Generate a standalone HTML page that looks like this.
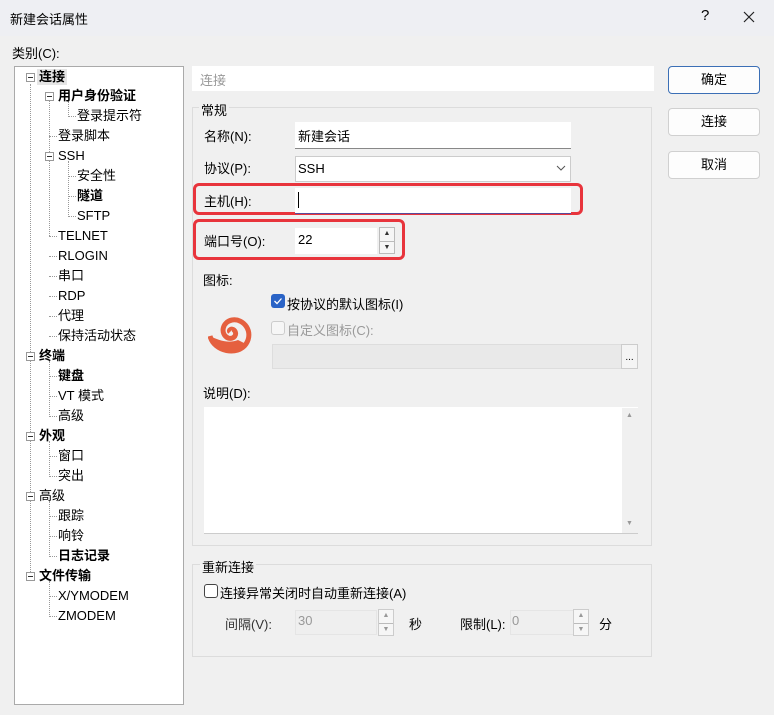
<!DOCTYPE html>
<html><head><meta charset="utf-8"><style>
*{box-sizing:border-box;margin:0;padding:0}
body{width:774px;height:715px;background:#f0f0f0;font-family:"Liberation Sans","Noto Sans CJK SC",sans-serif;font-size:13px;color:#000;position:relative;overflow:hidden}
.a{position:absolute;white-space:nowrap}
.t{position:absolute;white-space:nowrap;line-height:16px}
.b{font-weight:bold}
.ex{position:absolute;width:9px;height:9px;border:1px solid #999;background:#fff}
.ex:after{content:"";position:absolute;left:1px;top:3px;width:5px;height:1px;background:#333}
.vl{position:absolute;border-left:1px dotted #999;width:0}
.hl{position:absolute;border-top:1px dotted #999;height:0}
.inp{position:absolute;background:#fff;border-bottom:1px solid #888}
.btn{position:absolute;left:668px;width:92px;height:28px;background:#fdfdfd;border:1px solid #d0d0d0;border-radius:4px;text-align:center;line-height:26px}
.grp{position:absolute;border:1px solid #dcdcdc}
.spin{position:absolute;width:16px;border:1px solid #bbb;background:#f6f6f6}
.spin div{height:50%;font-size:7px;text-align:center;line-height:11px;color:#333}
.spin div+div{border-top:1px solid #bbb}
</style></head><body>
<div class="a" style="left:0;top:0;width:774px;height:36px;background:#eeeff3"></div>
<div class="a" style="left:10px;top:9px;font-size:13px">新建会话属性</div>
<div class="a" style="left:701px;top:7px;font-size:15px">?</div>
<svg class="a" style="left:743px;top:11px" width="12" height="12" viewBox="0 0 12 12"><path d="M1 1L11 11M11 1L1 11" stroke="#222" stroke-width="1.2"/></svg>
<div class="a" style="left:12px;top:43px">类别(C):</div>

<div class="a" style="left:14px;top:66px;width:170px;height:639px;background:#fff;border:1px solid #aaa"></div>
<div class="vl" style="left:30px;top:84px;height:492px"></div>
<div class="vl" style="left:49px;top:101px;height:135px"></div>
<div class="vl" style="left:49px;top:361px;height:56px"></div>
<div class="vl" style="left:49px;top:441px;height:36px"></div>
<div class="vl" style="left:49px;top:501px;height:56px"></div>
<div class="vl" style="left:49px;top:581px;height:36px"></div>
<div class="vl" style="left:68px;top:101px;height:16px"></div>
<div class="vl" style="left:68px;top:161px;height:56px"></div>
<div class="ex" style="left:26px;top:73px"></div>
<div class="ex" style="left:45px;top:92px"></div>
<div class="ex" style="left:45px;top:152px"></div>
<div class="ex" style="left:26px;top:352px"></div>
<div class="ex" style="left:26px;top:432px"></div>
<div class="ex" style="left:26px;top:492px"></div>
<div class="ex" style="left:26px;top:572px"></div>
<div class="hl" style="left:68px;top:116px;width:8px"></div>
<div class="hl" style="left:68px;top:176px;width:8px"></div>
<div class="hl" style="left:68px;top:196px;width:8px"></div>
<div class="hl" style="left:68px;top:216px;width:8px"></div>
<div class="hl" style="left:49px;top:136px;width:8px"></div>
<div class="hl" style="left:49px;top:236px;width:8px"></div>
<div class="hl" style="left:49px;top:256px;width:8px"></div>
<div class="hl" style="left:49px;top:276px;width:8px"></div>
<div class="hl" style="left:49px;top:296px;width:8px"></div>
<div class="hl" style="left:49px;top:316px;width:8px"></div>
<div class="hl" style="left:49px;top:336px;width:8px"></div>
<div class="hl" style="left:49px;top:376px;width:8px"></div>
<div class="hl" style="left:49px;top:396px;width:8px"></div>
<div class="hl" style="left:49px;top:416px;width:8px"></div>
<div class="hl" style="left:49px;top:456px;width:8px"></div>
<div class="hl" style="left:49px;top:476px;width:8px"></div>
<div class="hl" style="left:49px;top:516px;width:8px"></div>
<div class="hl" style="left:49px;top:536px;width:8px"></div>
<div class="hl" style="left:49px;top:556px;width:8px"></div>
<div class="hl" style="left:49px;top:596px;width:8px"></div>
<div class="hl" style="left:49px;top:616px;width:8px"></div>

<div class="t b" style="left:37px;top:69px;background:#e5e5e5;padding:0 2px">连接</div>
<div class="t b" style="left:58px;top:88px">用户身份验证</div>
<div class="t" style="left:77px;top:108px">登录提示符</div>
<div class="t" style="left:58px;top:128px">登录脚本</div>
<div class="t" style="left:58px;top:148px">SSH</div>
<div class="t" style="left:77px;top:168px">安全性</div>
<div class="t b" style="left:77px;top:188px">隧道</div>
<div class="t" style="left:77px;top:208px">SFTP</div>
<div class="t" style="left:58px;top:228px">TELNET</div>
<div class="t" style="left:58px;top:248px">RLOGIN</div>
<div class="t" style="left:58px;top:268px">串口</div>
<div class="t" style="left:58px;top:288px">RDP</div>
<div class="t" style="left:58px;top:308px">代理</div>
<div class="t" style="left:58px;top:328px">保持活动状态</div>
<div class="t b" style="left:39px;top:348px">终端</div>
<div class="t b" style="left:58px;top:368px">键盘</div>
<div class="t" style="left:58px;top:388px">VT 模式</div>
<div class="t" style="left:58px;top:408px">高级</div>
<div class="t b" style="left:39px;top:428px">外观</div>
<div class="t" style="left:58px;top:448px">窗口</div>
<div class="t" style="left:58px;top:468px">突出</div>
<div class="t" style="left:39px;top:488px">高级</div>
<div class="t" style="left:58px;top:508px">跟踪</div>
<div class="t" style="left:58px;top:528px">响铃</div>
<div class="t b" style="left:58px;top:548px">日志记录</div>
<div class="t b" style="left:39px;top:568px">文件传输</div>
<div class="t" style="left:58px;top:588px">X/YMODEM</div>
<div class="t" style="left:58px;top:608px">ZMODEM</div>

<div class="a" style="left:192px;top:66px;width:462px;height:25px;background:#fff"></div>
<div class="a" style="left:200px;top:70px;color:#999">连接</div>

<div class="grp" style="left:192px;top:107px;width:460px;height:439px"></div>
<div class="a" style="left:199px;top:100px;background:#f0f0f0;padding:0 2px">常规</div>
<div class="a" style="left:204px;top:126px">名称(N):</div>
<div class="inp" style="left:295px;top:122px;width:276px;height:27px"></div>
<div class="a" style="left:298px;top:126px">新建会话</div>
<div class="a" style="left:204px;top:158px">协议(P):</div>
<div class="a" style="left:295px;top:156px;width:276px;height:26px;background:#fff;border:1px solid #ccc"></div>
<div class="a" style="left:298px;top:161px">SSH</div>
<svg class="a" style="left:556px;top:165px" width="10" height="6" viewBox="0 0 10 6"><path d="M1 1L5 5L9 1" fill="none" stroke="#555"/></svg>
<div class="a" style="left:193px;top:183px;width:390px;height:32px;border:3px solid #e8343c;border-radius:6px"></div>
<div class="a" style="left:204px;top:191px">主机(H):</div>
<div class="inp" style="left:295px;top:188px;width:276px;height:26px;border-bottom:1px solid #5a4a9a"></div>
<div class="a" style="left:298px;top:192px;width:1px;height:16px;background:#000"></div>
<div class="a" style="left:193px;top:219px;width:212px;height:41px;border:3px solid #e8343c;border-radius:6px"></div>
<div class="a" style="left:204px;top:231px">端口号(O):</div>
<div class="a" style="left:295px;top:228px;width:82px;height:26px;background:#fff"></div>
<div class="a" style="left:298px;top:232px">22</div>
<div class="spin" style="left:379px;top:227px;height:27px"><div>▲</div><div>▼</div></div>
<div class="a" style="left:203px;top:270px">图标:</div>
<div class="a" style="left:271px;top:294px;width:14px;height:14px;background:#2a63c6;border-radius:3px"></div>
<svg class="a" style="left:271px;top:294px" width="14" height="14" viewBox="0 0 14 14"><path d="M3.5 7L6 9.5L10.5 4.5" fill="none" stroke="#fff" stroke-width="1.3"/></svg>
<div class="a" style="left:287px;top:294px">按协议的默认图标(I)</div>
<div class="a" style="left:271px;top:321px;width:14px;height:14px;border:1px solid #ccc;border-radius:3px;background:#f6f6f6"></div>
<div class="a" style="left:287px;top:320px;color:#999">自定义图标(C):</div>
<svg class="a" style="left:208px;top:316px" width="46" height="40" viewBox="0 0 46 40"><path d="M2 20 C6 36 30 40 38 28 C46 16 36 2 24 4 C14 6 12 18 20 22 C26 24 30 18 26 14 C24 12 20 14 22 16" fill="none" stroke="#e5603f" stroke-width="5"/><path d="M2 20 C10 24 20 28 30 24 L38 28 C30 40 6 36 2 20Z" fill="#e5603f"/></svg>
<div class="a" style="left:272px;top:344px;width:350px;height:25px;background:#e9e9e9;border:1px solid #ddd"></div>
<div class="a" style="left:621px;top:344px;width:17px;height:25px;background:#f4f4f4;border:1px solid #ccc;font-size:10px;text-align:center;line-height:26px">...</div>
<div class="a" style="left:203px;top:383px">说明(D):</div>
<div class="a" style="left:204px;top:407px;width:434px;height:127px;background:#fff;border-bottom:1px solid #ccc"></div>
<div class="a" style="left:622px;top:408px;width:16px;height:125px;background:#f0f0f0"></div>
<div class="a" style="left:626px;top:412px;font-size:7px;color:#999">▲</div>
<div class="a" style="left:626px;top:520px;font-size:7px;color:#999">▼</div>

<div class="grp" style="left:192px;top:564px;width:460px;height:93px"></div>
<div class="a" style="left:200px;top:557px;background:#f0f0f0;padding:0 2px">重新连接</div>
<div class="a" style="left:204px;top:584px;width:14px;height:14px;border:1px solid #444;border-radius:3px;background:#fff"></div>
<div class="a" style="left:220px;top:583px">连接异常关闭时自动重新连接(A)</div>
<div class="a" style="left:225px;top:614px;color:#333">间隔(V):</div>
<div class="a" style="left:295px;top:610px;width:82px;height:25px;background:#efefef;border:1px solid #e5e5e5"></div>
<div class="a" style="left:298px;top:613px;color:#999">30</div>
<div class="spin" style="left:378px;top:609px;height:27px;border-color:#ccc"><div style="color:#999">▲</div><div style="color:#999">▼</div></div>
<div class="a" style="left:409px;top:614px">秒</div>
<div class="a" style="left:460px;top:614px">限制(L):</div>
<div class="a" style="left:510px;top:610px;width:64px;height:25px;background:#efefef;border:1px solid #e5e5e5"></div>
<div class="a" style="left:512px;top:613px;color:#999">0</div>
<div class="spin" style="left:573px;top:609px;height:27px;border-color:#ccc"><div style="color:#999">▲</div><div style="color:#999">▼</div></div>
<div class="a" style="left:599px;top:614px">分</div>

<div class="btn" style="top:66px;border:1px solid #3b6fb6">确定</div>
<div class="btn" style="top:108px">连接</div>
<div class="btn" style="top:151px">取消</div>
</body></html>
